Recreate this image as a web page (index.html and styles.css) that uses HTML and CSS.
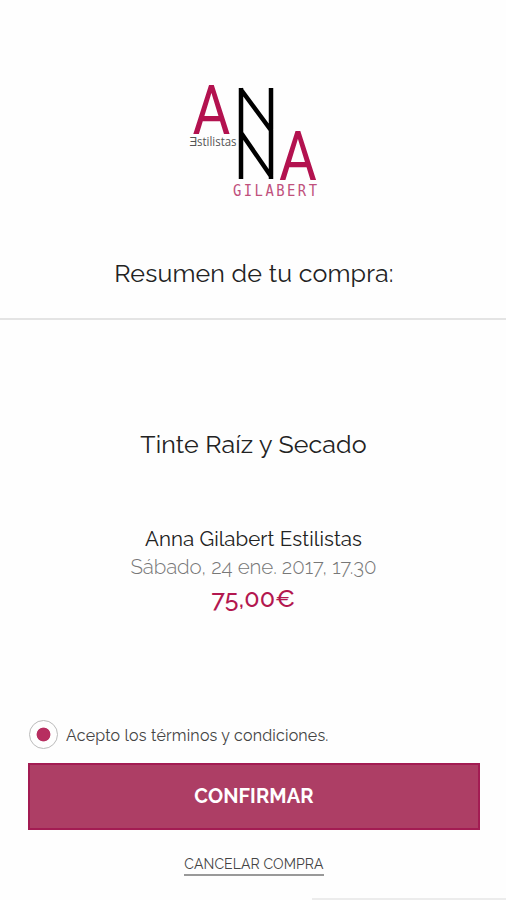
FILE: index.html
```
<!DOCTYPE html>
<html lang="es">
<head>
    <meta charset="UTF-8">
    <meta name="viewport" content="width=device-width, initial-scale=1">
    <title>Resumen de tu compra</title>
    <link rel="stylesheet" href="styles.css">
</head>
<body>
    <div class="page">
        <header class="header">
            <svg class="logo" width="136" height="140" viewBox="186 60 136 140">
                <text class="logo-a" transform="translate(192.500 134) scale(.84 1)" textLength="45" lengthAdjust="spacingAndGlyphs">A</text>
                <text class="logo-a" transform="translate(279 180) scale(.84 1)" textLength="45" lengthAdjust="spacingAndGlyphs">A</text>
                <path class="logo-n" d="M241 88V179M271 88V179M240.500 89L271.500 131M240.500 132L271.500 177"/>
                <text class="logo-small" x="189.500" y="146" textLength="47" lengthAdjust="spacingAndGlyphs">Ǝstilistas</text>
                <text class="logo-name" transform="translate(233 195.500) scale(.84 1)" textLength="100">GILABERT</text>
            </svg>
            <h1 class="title">Resumen de tu compra:</h1>
        </header>

        <main class="summary">
            <h2 class="service">Tinte Raíz y Secado</h2>
            <div class="salon">Anna Gilabert Estilistas</div>
            <div class="date">Sábado, 24 ene. 2017, 17.30</div>
            <div class="price">75,00€</div>
        </main>

        <form class="actions">
            <label class="terms">
                <input class="terms-radio" type="radio" name="terms" checked>
                <span class="terms-text">Acepto los términos y condiciones.</span>
            </label>
            <button class="btn-confirm" type="button">CONFIRMAR</button>
            <a class="cancel" href="#">CANCELAR COMPRA</a>
        </form>
        <div class="bottom-line"></div>
    </div>
</body>
</html>
```
FILE: styles.css
```
body {
    margin: 0;
    background: #fefefe;
    color: #222;
    font-family: Raleway, Lato, sans-serif;
    font-variant-numeric: oldstyle-nums;
}
.page {
    display: flex;
    flex-direction: column;
    height: 900px;
    overflow: hidden;
    text-align: center;
}
.header {
    display: flex;
    flex-direction: column;
    align-items: center;
    box-sizing: border-box;
    height: 320px;
    padding: 60px 0 0 2px;
    border-bottom: 2px solid #e4e4e4;
}
.logo {
    display: block;
}
.logo-a {
    fill: #b3124f;
    font-family: Roboto, sans-serif;
    font-size: 68px;
}
.logo-n {
    fill: none;
    stroke: #000;
    stroke-width: 4.5;
}
.logo-small {
    fill: #555;
    font-family: "Open Sans", sans-serif;
    font-size: 12px;
}
.logo-name {
    fill: #c0507c;
    font-family: "DejaVu Sans Mono", monospace;
    font-size: 16.5px;
}
.title {
    margin: 57px 0 0;
    font-size: 25px;
    font-weight: 400;
    line-height: 32px;
    letter-spacing: .15px;
}
.summary {
    height: 385px;
    padding-left: 1px;
}
.service {
    margin: 108px 0 0;
    font-size: 25px;
    font-weight: 400;
    line-height: 32px;
    letter-spacing: .1px;
}
.salon {
    margin-top: 65px;
    font-size: 20.5px;
    line-height: 28px;
    letter-spacing: .06px;
}
.date {
    color: #777;
    font-size: 20.5px;
    font-weight: 300;
    line-height: 28px;
    letter-spacing: -.08px;
}
.price {
    color: #b3174f;
    font-size: 25px;
    font-weight: 500;
    line-height: 34px;
    letter-spacing: .2px;
}
.actions {
    display: flex;
    flex-direction: column;
    align-items: center;
    padding: 15px 26px 0 28px;
}
.terms {
    display: flex;
    align-items: center;
    align-self: flex-start;
    gap: 8px;
    height: 29px;
    padding-left: 1px;
}
.terms-radio {
    appearance: none;
    flex: none;
    box-sizing: border-box;
    width: 29px;
    height: 29px;
    margin: 0;
    border: 1px solid #bbb;
    border-radius: 50%;
    background: radial-gradient(circle, #b72e60 6.5px, transparent 7.3px);
}
.terms-text {
    padding-top: 2px;
    color: #444;
    font-size: 16px;
    letter-spacing: .19px;
}
.btn-confirm {
    width: 452px;
    height: 67px;
    margin-top: 14px;
    padding: 0 0 2px;
    border: 2px solid #a31c53;
    background: #ad3e65;
    color: #fff;
    font-family: inherit;
    font-size: 20px;
    font-weight: 700;
    letter-spacing: .1px;
}
.cancel {
    margin-top: 24px;
    border-bottom: 2px solid #999;
    color: #444;
    font-size: 14px;
    line-height: 20px;
    letter-spacing: .1px;
    text-decoration: none;
}
.bottom-line {
    width: 194px;
    height: 2px;
    margin: auto 0 0 auto;
    background: #ececec;
}
```
